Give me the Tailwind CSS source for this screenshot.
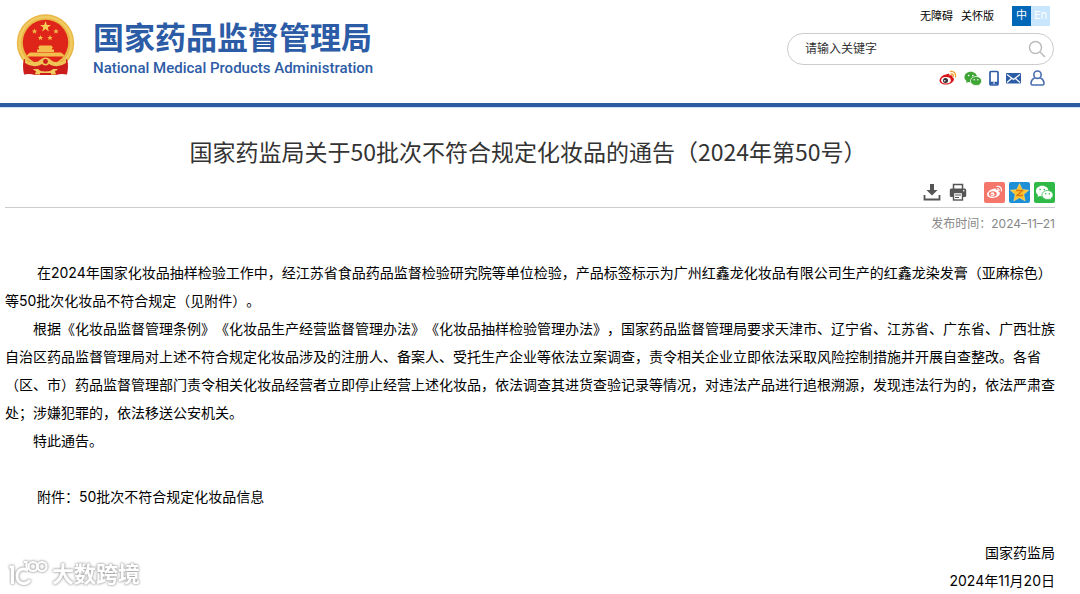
<!DOCTYPE html>
<html lang="zh-CN">
<head>
    <meta charset="UTF-8">
    <meta name="viewport" content="width=device-width, initial-scale=1.0">
    <title>国家药品监督管理局</title>
    <script src="https://cdn.jsdelivr.net/npm/@tailwindcss/browser@4"></script>
</head>
<body class="relative min-h-screen overflow-x-hidden bg-white text-black font-['Inter','Noto_Sans_CJK_SC',sans-serif] [text-spacing-trim:space-all]">
    <!-- shared symbols -->
    <svg class="hidden">
        <symbol id="wechat" viewBox="0 0 24 20">
            <path d="M9 1C4.300 1 .6 4.100.6 8c0 2.200 1.100 4.100 2.900 5.400L2.700 16l3-1.500c1 .3 2.100.5 3.300.5 4.700 0 8.400-3.100 8.400-7S13.700 1 9 1z"/>
            <path d="M16 7.300c-4.200 0-7.400 2.700-7.400 6s3.200 6 7.400 6c1 0 1.900-.1 2.700-.4l2.700 1.100-.7-2.200c1.700-1.100 2.800-2.700 2.800-4.500 0-3.300-3.300-6-7.500-6z" stroke="var(--gap)" stroke-width="1"/>
            <g fill="var(--gap)"><circle cx="6.200" cy="6" r="1.100"/><circle cx="11.700" cy="6" r="1.100"/><circle cx="13.600" cy="11.500" r="1"/><circle cx="18.400" cy="11.500" r="1"/></g>
        </symbol>
    </svg>

    <header class="flex items-start justify-between border-b-4 border-[#2e5aa0] pl-4 pr-[26px] pb-[17px] shadow-[0_1px_0_#cfe3f8]">
        <a href="#" class="flex pt-3 text-[#2d5ca6]">
            <svg class="mt-px h-[64px] w-[60px]" viewBox="0 0 60 64" aria-label="国徽">
                <circle cx="29.500" cy="30" r="28.700" fill="#e9b745"/>
                <circle cx="29.500" cy="30" r="26" fill="none" stroke="#f2ca62" stroke-width="2.500"/>
                <circle cx="29.500" cy="29.500" r="22.700" fill="#df2419"/>
                <path d="M29.500 8l1.400 3.900h4.100l-3.300 2.500 1.200 4-3.400-2.400-3.400 2.400 1.200-4-3.300-2.500h4.100z" fill="#f6cd55"/>
                <g fill="#f3be4b">
                    <path id="star" d="M18.500 15.500l.8 1.900h2l-1.600 1.300.6 2-1.800-1.200-1.800 1.200.6-2-1.600-1.300h2z"/>
                    <use href="#star" x="21.500"/><use href="#star" x="6" y="6.500"/><use href="#star" x="15.500" y="6.500"/>
                    <path d="M23.500 32.500h12l1.500 2.500h-1v1.500h2v2.500h-17v-2.500h2V35h-1z"/>
                    <path d="M14 39.500h31l3 2.500v1.500H11V42z"/>
                </g>
                <path d="M8 46q-2 7 0 15.500 6-1 11 .5h21q5-1.500 11-.5 2-8.500 0-15.500l-9 4H17z" fill="#cc1c1b"/>
                <path d="M9 46q6 5 13 2.500l4-3q3.500-2 7 0l4 3q7 2.500 13-2.500v4q-7 5-14 2.500l-3-1.500q-3.500 3-7 0L23 52.500Q16 55 9 50z" fill="#efc455"/>
                <circle cx="29.500" cy="48.500" r="2.400" fill="#cc1c1b"/>
                <path d="M17 56h5q2 2.500 7.500 2.500T37 56h5q-1 1.500-3 2l1 3.500h-5v-1.500H24v1.500h-5l1-3.500q-2-.5-3-2z" fill="#f2cb60"/>
            </svg>
            <span class="ml-[17px] mt-2 flex flex-col">
                <span class="text-[31px] leading-9 font-bold">国家药品监督管理局</span>
                <span class="text-[15px] leading-6 font-medium font-['Roboto',sans-serif]">National Medical Products Administration</span>
            </span>
        </a>

        <div class="flex w-[267px] flex-col items-end pt-1.5">
            <nav class="flex items-center text-[11px] leading-[19px]">
                <a href="#">无障碍</a>
                <a href="#" class="ml-2">关怀版</a>
                <a href="#" class="ml-[18px] h-5 w-[19px] bg-[#0068b7] text-center text-white">中</a>
                <a href="#" class="mr-1 h-5 w-[19px] bg-[#c8e6fd] text-center text-white">En</a>
            </nav>
            <form class="mt-[7px] flex h-8 w-full items-center rounded-full border border-[#ccc] pl-[17px] pr-[7px]">
                <input type="text" aria-label="请输入关键字" placeholder="请输入关键字" class="min-w-0 flex-1 text-xs outline-none placeholder:text-[#333]">
                <button type="button" aria-label="搜索">
                    <svg class="size-[18px]" viewBox="0 0 18 18" fill="none" stroke="#bbb" stroke-width="1.500"><circle cx="7.500" cy="7.500" r="6"/><path d="M12 12l5 5"/></svg>
                </button>
            </form>
            <div class="mt-[5px] mr-[9px] flex items-center">
                <a href="#" aria-label="微博">
                    <svg class="h-4 w-[18px]" viewBox="0 0 18 16">
                        <path d="M7 4.500c2-1.200 3.800-1 3.600 1 2-.7 3.500 0 2.800 1.700 1.400.5 1.800 1.500 1.400 2.800-.8 2.500-4 4.500-8 4.500C3 14.500.5 12.800.5 10.500.5 8 4 4.500 7 4.500z" fill="#d9151b"/>
                        <ellipse cx="7" cy="10.200" rx="4.800" ry="3.200" fill="#fff"/>
                        <circle cx="6.500" cy="10.400" r="2.500" fill="#333"/><circle cx="5.800" cy="10.800" r=".8" fill="#fff"/>
                        <path d="M11.500 1.500c3.500-.6 5.800 2 5 5.300M12 4c1.600-.2 2.500.8 2.200 2.300" fill="none" stroke="#f3a336" stroke-width="1.400" stroke-linecap="round"/>
                    </svg>
                </a>
                <a href="#" aria-label="微信" class="ml-[7px]"><svg class="h-[15px] w-[18px] fill-[#3fa535] [--gap:#fff]"><use href="#wechat"/></svg></a>
                <a href="#" aria-label="手机版" class="ml-[7px]">
                    <svg class="h-4 w-[10px]" viewBox="0 0 10 16"><rect x="1" y="1.500" width="8" height="13.500" rx="1" fill="none" stroke="#2d5ca6" stroke-width="1.700"/><path d="M1 13h8" stroke="#2d5ca6" stroke-width="2.500"/><path d="M4 13h2" stroke="#fff" stroke-width="1.200"/></svg>
                </a>
                <a href="#" aria-label="邮箱" class="ml-[7px]">
                    <svg class="h-4 w-[15px]" viewBox="0 0 15 16"><rect y="3" width="15" height="10.500" rx=".7" fill="#2d5ca6"/><path d="M1 4.500l6.500 5 6.500-5M1 12.500l4.500-4M14 12.500l-4.500-4" fill="none" stroke="#fff" stroke-width="1.200"/></svg>
                </a>
                <a href="#" aria-label="个人中心" class="ml-[9px]">
                    <svg class="h-4 w-[15px]" viewBox="0 0 15 16" fill="none" stroke="#4a6db0" stroke-width="1.600" stroke-linejoin="round"><circle cx="7.500" cy="4.700" r="3.700"/><path d="M4.700 8C2.500 9 1 10.800 1 13.500q0 1.500 1.500 1.500h10q1.500 0 1.500-1.500c0-2.700-1.500-4.500-3.700-5.500"/></svg>
                </a>
            </div>
        </div>
    </header>

    <main class="pt-[26px] pl-[5px] pr-[25px]">
        <h1 class="pr-1 text-center text-[23px] leading-9 text-[#333] font-['Noto_Sans_CJK_SC',sans-serif]">国家药监局关于50批次不符合规定化妆品的通告（2024年第50号）</h1>

        <div class="mt-[13px] flex h-[26px] items-start justify-end border-b border-[#ccc]">
            <button type="button" aria-label="下载" class="mt-px">
                <svg class="h-[18px] w-[18px]" viewBox="0 0 18 18" fill="#555"><path d="M7 1h4v6h3.500L9 12.500 3.500 7H7z"/><path d="M1.500 12v4.500h15V12" fill="none" stroke="#555" stroke-width="1.800"/></svg>
            </button>
            <button type="button" aria-label="打印" class="ml-2 mt-px">
                <svg class="h-[18px] w-[18px]" viewBox="0 0 18 18"><path d="M4.500 6V1.500h9V6" fill="none" stroke="#555" stroke-width="1.500"/><rect x=".8" y="5.500" width="16.400" height="8.500" rx="1.500" fill="#555"/><rect x="4.500" y="9.500" width="9" height="7.500" fill="#fff" stroke="#555" stroke-width="1.400"/><path d="M6 12h6M6 14.500h4" stroke="#555"/><circle cx="14.700" cy="7.700" r=".8" fill="#fff"/></svg>
            </button>
            <a href="#" aria-label="分享到微博" class="ml-[17px]">
                <svg class="size-[21px]" viewBox="0 0 21 21"><rect width="21" height="21" rx="2" fill="#f5766a"/><path d="M9 7c1.800-1 3.200-.6 2.900.9 1.700-.4 2.900.1 2.400 1.500 1.400.4 1.900 1.400 1.500 2.600-.7 2.100-3.600 3.900-7 3.900-3.400 0-5.700-1.500-5.700-3.500C3.100 10.300 6.300 7.500 9 7z" fill="#fff"/><ellipse cx="8.800" cy="12" rx="4" ry="2.700" fill="#f5766a"/><circle cx="8.500" cy="12.200" r="1.900" fill="#fff"/><circle cx="8" cy="12.500" r=".8" fill="#f5766a"/><path d="M13 4.500c3-.5 5 1.700 4.300 4.500M13.300 6.800c1.300-.2 2 .7 1.700 1.900" fill="none" stroke="#fff" stroke-width="1.200" stroke-linecap="round"/></svg>
            </a>
            <a href="#" aria-label="分享到QQ空间" class="ml-1">
                <svg class="size-[21px]" viewBox="0 0 21 21"><rect width="21" height="21" rx="2" fill="#1d8fd6"/><path d="M10.500 1.500l2.700 6 6.500.7-4.900 4.300 1.400 6.500-5.700-3.300L4.800 19l1.400-6.500L1.300 8.200l6.500-.7z" fill="#fdc22d" stroke="#fde08a" stroke-width=".5"/><path d="M7 8.500h6.500l-5.500 5h6" fill="none" stroke="#d97a10" stroke-width="1.300"/></svg>
            </a>
            <a href="#" aria-label="分享到微信" class="ml-1">
                <svg class="size-[21px] fill-white [--gap:#2fba48]" viewBox="0 0 21 21"><rect width="21" height="21" rx="2" fill="#2fba48"/><use href="#wechat" x="1.500" y="3" width="18" height="15"/></svg>
            </a>
        </div>
        <p class="mt-1.5 text-right text-xs leading-5 text-[#888]">发布时间：2024–11–21</p>

        <article class="mt-[25px] text-sm leading-7">
            <p class="indent-8">在2024年国家化妆品抽样检验工作中，经江苏省食品药品监督检验研究院等单位检验，产品标签标示为广州红鑫龙化妆品有限公司生产的红鑫龙染发膏（亚麻棕色）等50批次化妆品不符合规定（见附件）。</p>
            <p class="indent-7">根据《化妆品监督管理条例》《化妆品生产经营监督管理办法》《化妆品抽样检验管理办法》，国家药品监督管理局要求天津市、辽宁省、江苏省、广东省、广西壮族自治区药品监督管理局对上述不符合规定化妆品涉及的注册人、备案人、受托生产企业等依法立案调查，责令相关企业立即依法采取风险控制措施并开展自查整改。各省（区、市）药品监督管理部门责令相关化妆品经营者立即停止经营上述化妆品，依法调查其进货查验记录等情况，对违法产品进行追根溯源，发现违法行为的，依法严肃查处；涉嫌犯罪的，依法移送公安机关。</p>
            <p class="indent-7">特此通告。</p>
            <p class="mt-7 indent-8">附件：<a href="#">50批次不符合规定化妆品信息</a></p>
            <p class="mt-7 text-right">国家药监局</p>
            <p class="text-right">2024年11月20日</p>
        </article>
    </main>

    <!-- watermark -->
    <div class="absolute left-2 top-[558px] flex items-center text-white [filter:drop-shadow(0_0_1px_#999)_drop-shadow(0_0_1px_#ccc)]">
        <svg class="h-8 w-10" viewBox="0 0 40 32" fill="none" stroke="#fff" stroke-width="3"><path d="M1.500 9h3v17M20 12c-7-3-11 1-11 6 0 8 9 10 13 4"/><path d="M16 4h2.500v9" stroke-width="2.200"/><circle cx="25" cy="8.500" r="4.500" stroke-width="2.200"/><circle cx="34" cy="8.500" r="4.500" stroke-width="2.200"/></svg>
        <span class="ml-1 text-[22px] leading-8 font-bold">大数跨境</span>
    </div>
</body>
</html>
